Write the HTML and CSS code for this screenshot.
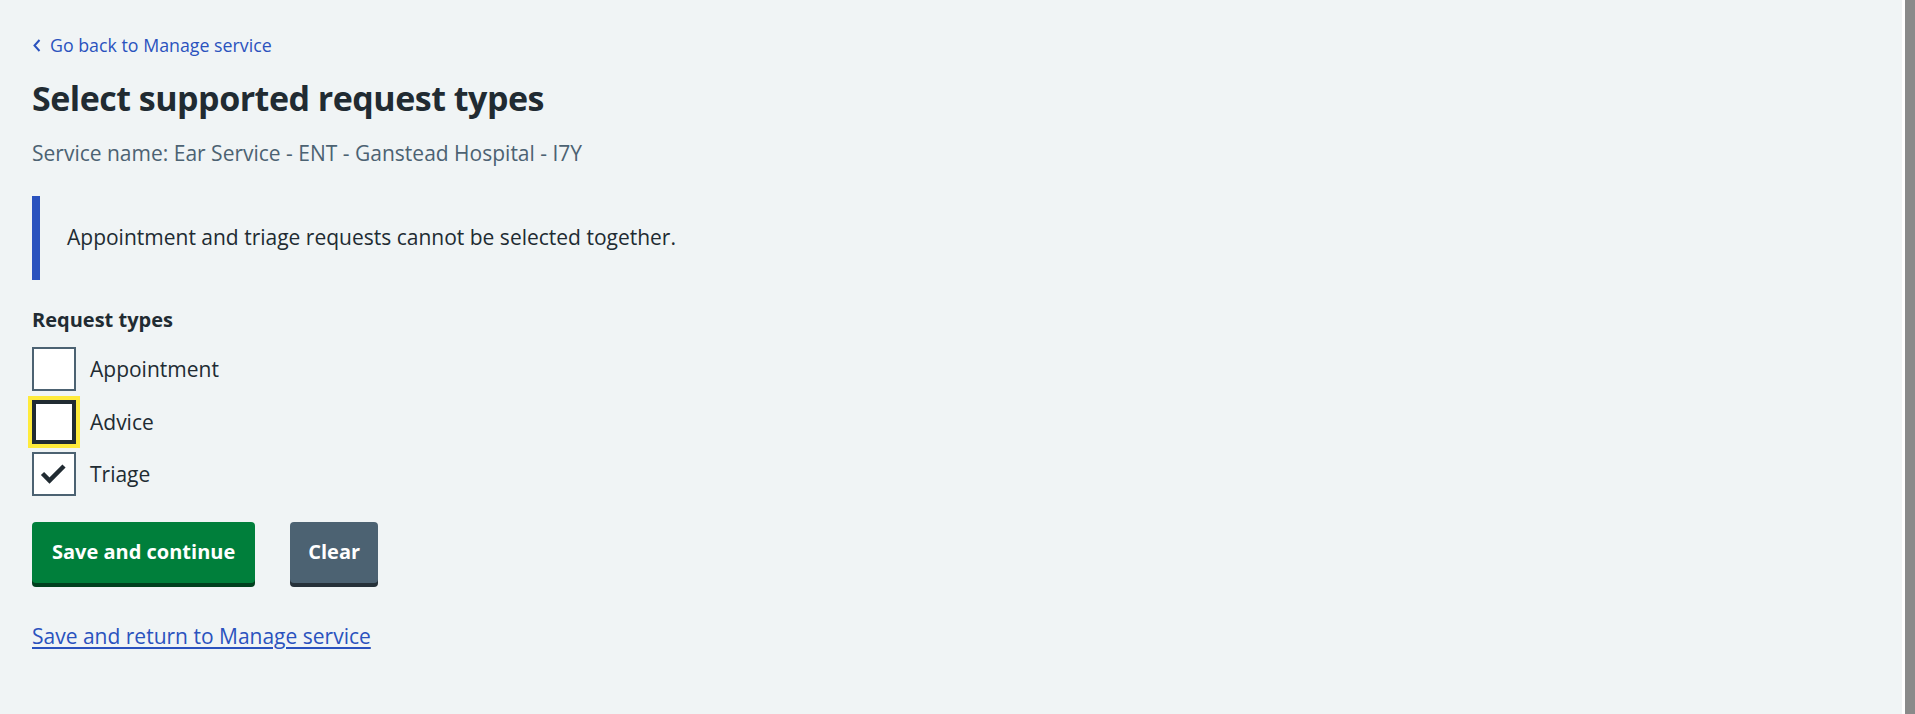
FILE: index.html
```html
<!DOCTYPE html>
<html lang="en">
<head>
<meta charset="utf-8">
<title>Select supported request types</title>
<link rel="stylesheet" href="styles.css">
</head>
<body>
<div class="shell">
  <main class="page">
    <a class="back-link" href="#">
      <svg class="back-chevron" width="8" height="13" viewBox="0 0 8 13" aria-hidden="true"><path d="M6.5 1 L1.5 6.5 L6.5 12" fill="none" stroke="currentColor" stroke-width="2"/></svg>
      <span>Go back to Manage service</span>
    </a>
    <h1 class="heading">Select supported request types</h1>
    <p class="caption">Service name: Ear Service - ENT - Ganstead Hospital - I7Y</p>
    <div class="inset">
      <p>Appointment and triage requests cannot be selected together.</p>
    </div>
    <fieldset class="fieldset">
      <legend class="legend">Request types</legend>
      <div class="checkboxes">
        <label class="checkbox">
          <span class="box"></span>
          <span class="label-text">Appointment</span>
        </label>
        <label class="checkbox">
          <span class="box box-focus"></span>
          <span class="label-text">Advice</span>
        </label>
        <label class="checkbox">
          <span class="box">
            <svg class="tick" width="44" height="44" viewBox="0 0 44 44" aria-hidden="true"><path d="M10.5 21.5 L17.5 28.5 L32 14" fill="none" stroke="#212b32" stroke-width="4.5"/></svg>
          </span>
          <span class="label-text">Triage</span>
        </label>
      </div>
    </fieldset>
    <div class="button-group">
      <button class="button button-primary" type="button">Save and continue</button>
      <button class="button button-secondary" type="button">Clear</button>
    </div>
    <a class="text-link" href="#">Save and return to Manage service</a>
  </main>
  <div class="rail"></div>
</div>
</body>
</html>
```

FILE: styles.css
```css
html, body {
  margin: 0;
  padding: 0;
  background: #f0f4f5;
}

body {
  font-family: "Open Sans", "Noto Sans", Arial, sans-serif;
  color: #212b32;
}

.shell {
  display: flex;
  min-height: 714px;
}

.page {
  flex: 1;
  padding: 33px 32px 40px 32px;
  display: flex;
  flex-direction: column;
  align-items: flex-start;
}

.rail {
  width: 10px;
  border-left: 3px solid #ffffff;
  background: #8a8a8a;
}

.back-link {
  display: flex;
  align-items: center;
  gap: 9px;
  color: #2a52be;
  text-decoration: none;
  font-size: 17.8px;
  line-height: 24px;
  height: 24px;
}

.back-chevron {
  display: block;
  margin-left: 1px;
}

.heading {
  margin: 19px 0 0 0;
  font-size: 34px;
  line-height: 44px;
  font-weight: 700;
  letter-spacing: -0.5px;
  color: #212b32;
}

.caption {
  margin: 18px 0 0 0;
  font-size: 21px;
  line-height: 30px;
  color: #4c6272;
}

.inset {
  margin-top: 28px;
  border-left: 8px solid #2a52be;
  padding: 26px 0 28px 27px;
  align-self: stretch;
}

.inset p {
  margin: 0;
  font-size: 21px;
  line-height: 30px;
}

.fieldset {
  border: 0;
  margin: 25px 0 0 0;
  padding: 0;
  min-width: 0;
}

.legend {
  padding: 0;
  font-size: 20px;
  line-height: 30px;
  font-weight: 700;
}

.checkboxes {
  margin-top: 12px;
  display: flex;
  flex-direction: column;
  gap: 8.5px;
}

.checkbox {
  display: flex;
  align-items: center;
  gap: 14px;
  height: 44px;
}

.box {
  position: relative;
  width: 44px;
  height: 44px;
  box-sizing: border-box;
  border: 2px solid #4c6272;
  background: #ffffff;
  flex: none;
}

.box-focus {
  border: 4px solid #212b32;
  box-shadow: 0 0 0 4px #ffeb3b;
}

.tick {
  position: absolute;
  left: -2px;
  top: -2px;
}

.label-text {
  font-size: 21px;
  line-height: 30px;
  color: #212b32;
}

.button-group {
  margin-top: 26px;
  display: flex;
  gap: 35px;
}

.button {
  font-family: inherit;
  font-size: 20px;
  font-weight: 700;
  line-height: 30px;
  color: #ffffff;
  border: 0;
  border-radius: 4px;
  padding: 15px 20px 16px 20px;
  cursor: pointer;
}

.button-primary {
  background: #007f3b;
  box-shadow: 0 4px 0 #00401e;
}

.button-secondary {
  background: #4c6272;
  box-shadow: 0 4px 0 #263139;
  padding-left: 18px;
  padding-right: 18px;
}

.text-link {
  margin-top: 38px;
  font-size: 21px;
  line-height: 30px;
  color: #2a52be;
  text-decoration: underline;
  text-underline-offset: 3px;
}
```
